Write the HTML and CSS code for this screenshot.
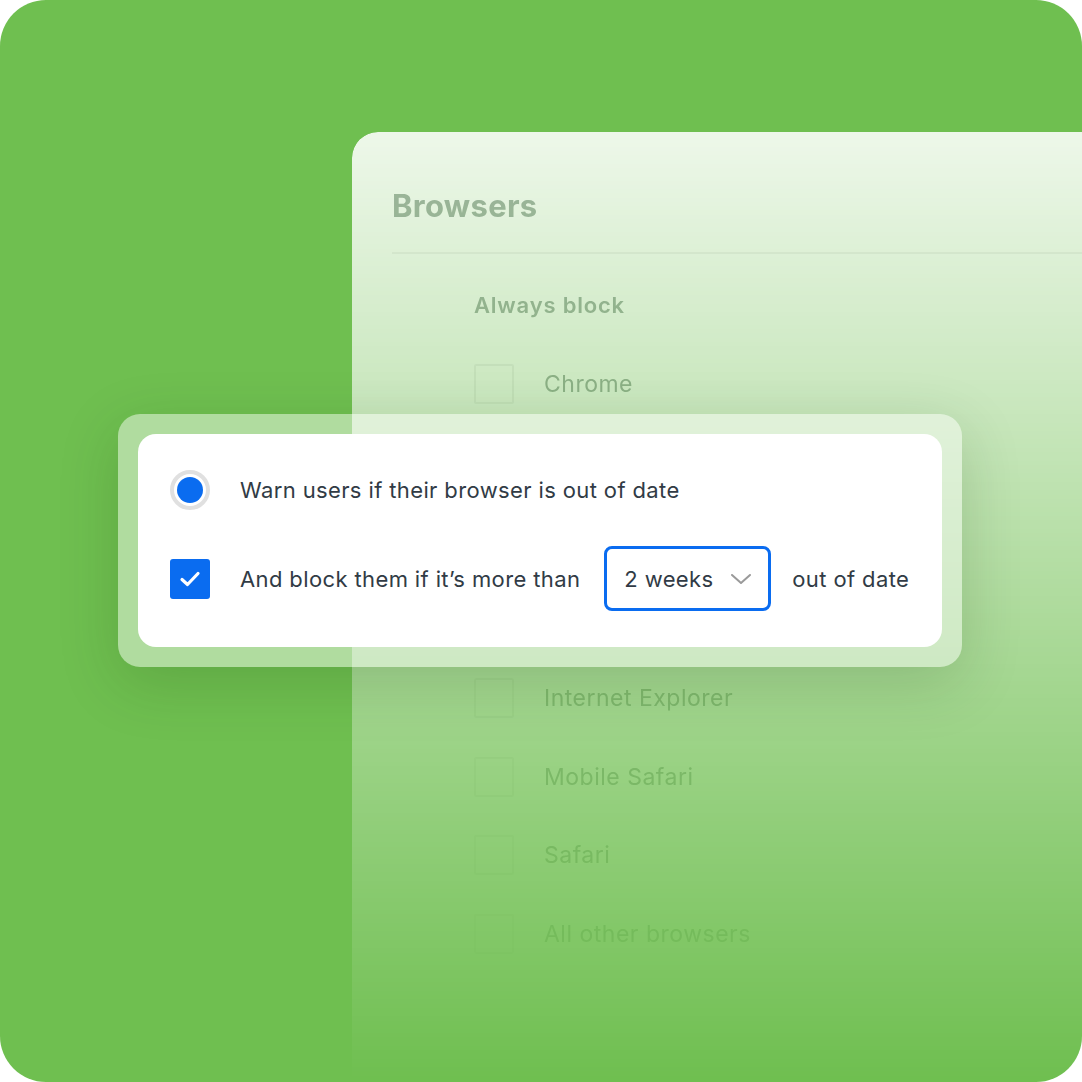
FILE: index.html
```html
<!DOCTYPE html>
<html>
<head>
    <title>Browsers</title>
    <meta charset="UTF-8">
    <meta name="viewport" content="width=device-width, initial-scale=1.0">
    <link rel="stylesheet" href="styles.css">
</head>
<body>
    <div class="frame">
        <div class="panel">
            <h2 class="panel-title">Browsers</h2>
            <div class="panel-body">
                <div class="group-label">Always block</div>
                <ul class="browser-list">
                    <li><span class="box"></span>Chrome</li>
                    <li><span class="box"></span>Edge</li>
                    <li><span class="box"></span>Firefox</li>
                    <li><span class="box"></span>Opera</li>
                    <li><span class="box"></span>Internet Explorer</li>
                    <li><span class="box"></span>Mobile Safari</li>
                    <li><span class="box"></span>Safari</li>
                    <li><span class="box"></span>All other browsers</li>
                </ul>
            </div>
        </div>

        <div class="popup">
            <div class="card">
                <div class="row">
                    <span class="radio"><span class="dot"></span></span>
                    <span class="label">Warn users if their browser is out of date</span>
                </div>
                <div class="row">
                    <span class="check">
                        <svg width="22" height="22" viewBox="0 0 22 22"><path d="M3 11.5 L8.5 16.5 L19 5.5" fill="none" stroke="#fff" stroke-width="3.2" stroke-linecap="round" stroke-linejoin="round"/></svg>
                    </span>
                    <span class="label">And block them if it’s more than</span>
                    <span class="select">
                        2 weeks
                        <svg width="20" height="10" viewBox="0 0 20 10"><path d="M1 1 L10 9 L19 1" fill="none" stroke="#9a9a9a" stroke-width="2" stroke-linecap="round" stroke-linejoin="round"/></svg>
                    </span>
                    <span class="label">out of date</span>
                </div>
            </div>
        </div>
    </div>
</body>
</html>
```

FILE: styles.css
```css
body {
    margin: 0;
    background: #fff;
    font-family: 'Inter', 'Noto Sans', sans-serif;
}
.frame {
    position: relative;
    width: 1082px;
    height: 1082px;
    box-sizing: border-box;
    border-radius: 46px;
    background: #6fbf50;
    overflow: hidden;
    display: flex;
    padding: 132px 0 0 352px;
}
.panel {
    flex: 1;
    background: #fff;
    border-top-left-radius: 26px;
    padding: 52px 0 0 40px;
    color: #9ba8a2;
    -webkit-mask-image: linear-gradient(to bottom, rgba(0,0,0,0.88), rgba(0,0,0,0));
    mask-image: linear-gradient(to bottom, rgba(0,0,0,0.88), rgba(0,0,0,0));
}
.panel-title {
    margin: 0;
    font-size: 31px;
    font-weight: 700;
    line-height: 44px;
    letter-spacing: 0.3px;
    color: #a3b2a8;
    padding-bottom: 24px;
    border-bottom: 2px solid rgba(0, 0, 0, 0.05);
}
.panel-body {
    padding: 36px 0 0 82px;
}
.group-label {
    font-size: 22px;
    font-weight: 600;
    line-height: 30px;
    letter-spacing: 0.8px;
    color: #a0aea6;
    margin-bottom: 44px;
}
.browser-list {
    list-style: none;
    margin: 0;
    padding: 0;
    display: flex;
    flex-direction: column;
    gap: 38.5px;
}
.browser-list li {
    display: flex;
    align-items: center;
    gap: 30px;
    height: 40px;
    font-size: 23px;
    letter-spacing: 0.5px;
}
.box {
    width: 40px;
    height: 40px;
    box-sizing: border-box;
    border: 2px solid rgba(0, 0, 0, 0.06);
    border-radius: 2px;
}
.popup {
    position: absolute;
    left: 118px;
    top: 414px;
    padding: 20px;
    border-radius: 22px;
    background: rgba(255, 255, 255, 0.45);
    box-shadow: 0 16px 60px rgba(20, 60, 10, 0.18);
}
.card {
    width: 804px;
    box-sizing: border-box;
    background: #fff;
    border-radius: 18px;
    padding: 36px 32px;
    display: flex;
    flex-direction: column;
    gap: 36px;
    color: #313b45;
    font-size: 22px;
    letter-spacing: 0.38px;
}
.row {
    display: flex;
    align-items: center;
}
.row .label {
    margin-left: 30px;
}
.row .select + .label {
    margin-left: 21px;
}
.radio {
    width: 40px;
    height: 40px;
    box-sizing: border-box;
    border: 4px solid #e0e0e0;
    border-radius: 50%;
    display: flex;
    align-items: center;
    justify-content: center;
}
.dot {
    width: 26px;
    height: 26px;
    border-radius: 50%;
    background: #0a6cf0;
}
.check {
    width: 40px;
    height: 40px;
    border-radius: 3px;
    background: #0a6cf0;
    display: flex;
    align-items: center;
    justify-content: center;
}
.select {
    margin-left: 24px;
    width: 167px;
    height: 65px;
    box-sizing: border-box;
    border: 3px solid #0a6cf0;
    border-radius: 8px;
    padding: 0 17px 0 17px;
    display: flex;
    align-items: center;
    justify-content: space-between;
}
```
